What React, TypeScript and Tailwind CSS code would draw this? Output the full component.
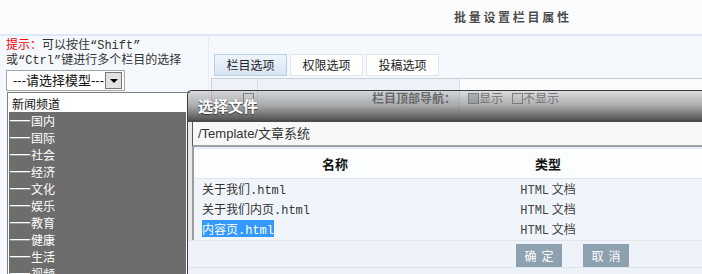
const channels = ["国内", "国际", "社会", "经济", "文化", "娱乐", "教育", "健康", "生活", "视频"];

const files = [
  { name: "关于我们", ext: ".html", selected: false },
  { name: "关于我们内页", ext: ".html", selected: false },
  { name: "内容页", ext: ".html", selected: true },
];

const tabs = ["栏目选项", "权限选项", "投稿选项"];

const mono = "font-['Liberation_Mono','Noto_Sans_CJK_SC',monospace]";
const sans = "font-['Liberation_Sans','Noto_Sans_CJK_SC',sans-serif]";

const Checkbox = ({ checked }: { checked?: boolean }) => (
  <span
    className={`inline-block w-[11px] h-[11px] border border-[#7a7a7a] ${checked ? "bg-[#b8c4d0]" : "bg-[#f4f4f4]"}`}
  />
);

export default function App() {
  return (
    <div className="relative w-[702px] h-[274px] overflow-hidden bg-[#f5f8fd] text-[#333] font-['Noto_Sans_CJK_SC',sans-serif]">
      {/* page title */}
      <div className="h-[36px] bg-[#fbfcfe] border-b-2 border-[#dde8f8] flex items-center pl-[454px]">
        <h1 className="text-[12px] font-bold tracking-[2.7px] text-[#4d4d4d] leading-none">批量设置栏目属性</h1>
      </div>

      <div className="flex">
        {/* left: column picker */}
        <div className="w-[208px] shrink-0 pt-[3px]">
          <p className={`pl-[6px] text-[12px] leading-[15px] ${mono}`}>
            <span className="text-[#ff0000]">提示：</span>可以按住“Shift”
            <br />
            或“Ctrl”键进行多个栏目的选择
          </p>
          <div className="mt-px ml-[6px] w-[119px] h-[21px] border border-[#a5a5a5] bg-white flex items-center pl-[6px]">
            <span className={`text-[13px] leading-none text-[#111] ${sans}`}>---请选择模型---</span>
            <span className="ml-auto mr-[2px] w-[17px] h-[17px] border border-[#777] bg-[#e2e2e2] flex items-center justify-center">
              <span className="w-0 h-0 border-l-[4px] border-r-[4px] border-t-[4px] border-l-transparent border-r-transparent border-t-black" />
            </span>
          </div>
          <div className="mt-px ml-[7px] w-[183px] h-[200px] border-l border-t border-[#7f7f7f] bg-white pt-[2px]">
            <div className="h-[17px] flex items-center pl-[4px] text-[12px] text-[#111]">新闻频道</div>
            <div className="ml-px w-[177px] bg-[#6d6d6d] text-white">
              {channels.map((c) => (
                <div key={c} className="h-[17px] flex items-center pl-px text-[12px] leading-none">
                  <span className={`text-[10px] font-bold ${sans}`}>——</span>
                  <span className="ml-px">{c}</span>
                </div>
              ))}
            </div>
          </div>
        </div>

        {/* right: tabs */}
        <div className="flex-1 border-l border-[#e6edf7] pt-[18px] pl-[5px] h-[238px]">
          <div className="flex gap-[3px]">
            {tabs.map((t, i) => (
              <div
                key={t}
                className={`w-[73px] h-[22px] flex items-center justify-center text-[12px] text-[#222] border ${
                  i === 0
                    ? "border-[#b9cde6] bg-[linear-gradient(to_bottom,#eef4fc,#d8e5f5)]"
                    : "border-[#dde5ef] bg-white"
                }`}
              >
                {t}
              </div>
            ))}
          </div>
          <div className="mt-[2px] -ml-[3px] border-t border-l border-[#c8cfd8] bg-[#fafbfd]">
            <div className="h-[38px] flex items-center text-[12px]">
              <div className="w-[46px] h-full border-r border-[#d7dfea] flex items-center justify-end pr-[3px] bg-[#eef2f8]">
                <Checkbox />
              </div>
              <div className="w-[202px] h-full bg-[#edf2f8] border-r border-[#d7dfea] flex items-center justify-end pr-[3px] font-bold text-[#555]">
                栏目顶部导航：
              </div>
              <div className="flex items-center pl-[8px] text-[#666]">
                <Checkbox checked />
                <span className="mr-[9px]">显示</span>
                <Checkbox />
                <span>不显示</span>
              </div>
            </div>
          </div>
        </div>
      </div>

      {/* dialog: choose file */}
      <div className="absolute left-[187px] top-[90px] w-[600px] h-[190px] flex flex-col">
        <div className="h-[30px] border-t border-l border-[#3a3a3a] rounded-tl-[5px] bg-[linear-gradient(to_bottom,rgba(150,150,150,0.3),rgba(120,120,120,0.6)_50%,rgba(70,70,70,0.92))] flex items-center pl-[10px]">
          <span className="text-[15px] font-bold text-white leading-none [text-shadow:0_1px_1px_#333]">选择文件</span>
        </div>
        <div className="h-[2px] bg-[#4b4b4b]" />
        <div className="border-l border-[#3d3d3d] bg-[#e9e9e9] flex-1 flex flex-col">
          <div className="pl-[4px]">
            <div className={`h-[25px] bg-[#f8f8f8] border-l border-[#555] border-b-2 border-b-[#a0a0a0] pl-[5px] flex items-center text-[13px] text-[#333] ${sans}`}>
              /Template/文章系统
            </div>
            <div className="border-l-2 border-[#9c9c9c] bg-[#f0f5fb]">
              <div className="h-[32px] border-t-2 border-[#e6eef9] border-b border-b-[#dfe7f2] bg-[#fcfdff] flex items-center text-[13px] font-bold text-[#111]">
                <div className="w-[282px] text-center">名称</div>
                <div className="w-[144px] text-center">类型</div>
              </div>
              <div className="pt-px">
                {files.map((f) => (
                  <div key={f.name} className="h-[20px] flex items-center text-[12px] leading-[15px]">
                    <div className="w-[282px] pl-[8px]">
                      <span className={f.selected ? "bg-[#3399ff] text-white" : "text-[#333]"}>
                        {f.name}
                        <span className={mono}>{f.ext}</span>
                      </span>
                    </div>
                    <div className="w-[144px] text-center text-[#444]">
                      <span className={mono}>HTML</span> 文档
                    </div>
                  </div>
                ))}
              </div>
            </div>
          </div>
          <div className="flex-1 bg-[#eef3fa] border-t border-[#e3e6ea]">
            <div className="h-[27px] border-b border-[#dce5f0] pt-[3px] pl-[328px] flex gap-[21px]">
              <button className="w-[46px] h-[23px] bg-[#8ea1b1] text-white text-[12px] tracking-[5px] pl-[5px]">确定</button>
              <button className="w-[46px] h-[23px] bg-[#8ea1b1] text-white text-[12px] tracking-[5px] pl-[5px]">取消</button>
            </div>
          </div>
        </div>
      </div>
    </div>
  );
}
